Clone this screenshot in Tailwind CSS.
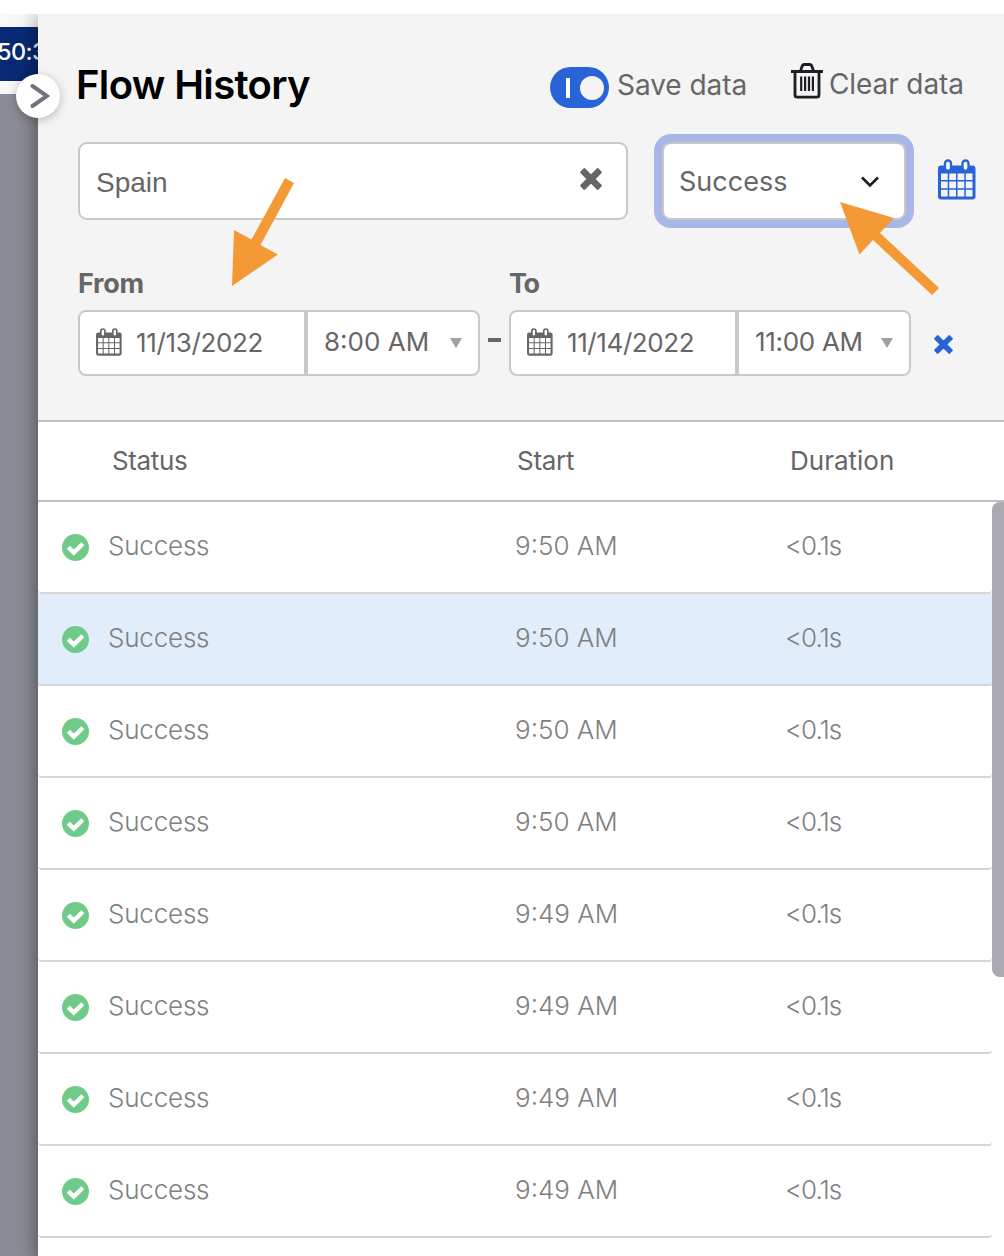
<!DOCTYPE html>
<html lang="en">
<head>
    <meta charset="UTF-8">
    <meta name="viewport" content="width=device-width, initial-scale=1.0">
    <title>Flow History</title>
    <script src="https://cdn.jsdelivr.net/npm/@tailwindcss/browser@4"></script>
</head>
<body class="bg-white font-['Inter','Liberation_Sans',sans-serif] text-[#666666]">
    <!-- Shared icons -->
    <svg class="hidden">
        <symbol id="calendar" viewBox="0 0 38 41">
            <path fill="currentColor" fill-rule="evenodd" d="M3 6.500H34.500Q37.500 6.500 37.500 9.500V37.500Q37.500 40.500 34.500 40.500H3Q0 40.500 0 37.500V9.500Q0 6.500 3 6.500ZM3 14.500V21H9.700V14.500ZM11.200 14.500V21H18V14.500ZM19.500 14.500V21H26.300V14.500ZM27.800 14.500V21H34.500V14.500ZM3 22.500V29.200H9.700V22.500ZM11.200 22.500V29.200H18V22.500ZM19.500 22.500V29.200H26.300V22.500ZM27.800 22.500V29.200H34.500V22.500ZM3 30.700V37.500H9.700V30.700ZM11.200 30.700V37.500H18V30.700ZM19.500 30.700V37.500H26.300V30.700ZM27.800 30.700V37.500H34.500V30.700Z"/>
            <rect x="7" y="1.500" width="6" height="10.500" rx="3" fill="white" stroke="currentColor" stroke-width="2.400"/>
            <rect x="24.500" y="1.500" width="6" height="10.500" rx="3" fill="white" stroke="currentColor" stroke-width="2.400"/>
        </symbol>
        <symbol id="cross" viewBox="0 0 22 22">
            <path d="M4.300 1.500L11 8.200L17.700 1.500L20.500 4.300L13.800 11L20.500 17.700L17.700 20.500L11 13.800L4.300 20.500L1.500 17.700L8.200 11L1.500 4.300Z" fill="currentColor" stroke="currentColor" stroke-width="2.600" stroke-linejoin="round"/>
        </symbol>
    </svg>

    <div class="relative h-[1256px] w-[1004px] overflow-hidden pt-[14px]">
        <div class="flex h-full overflow-hidden">
            <!-- Page behind the panel -->
            <div class="w-[38px] shrink-0 overflow-hidden bg-[#8c8c96]">
                <div class="h-[13px] bg-[#f8f8f8]"></div>
                <div class="h-[54px] bg-[#082a75] pt-[9px] text-[23.5px] leading-[32px] font-medium tracking-[-0.6px] whitespace-nowrap text-white"><span class="-ml-[3px]">50:35</span></div>
                <div class="h-[13px] bg-[#f8f8f8]"></div>
            </div>

            <!-- Panel -->
            <div class="flex w-[966px] flex-col bg-white shadow-[0_4px_20px_rgba(0,0,0,0.5)]">
                <div class="h-[408px] shrink-0 border-b-2 border-[#bfbfc5] bg-[#f4f4f4] pl-10">
                    <!-- Title bar -->
                    <div class="flex h-[128px] pt-[50px]">
                        <h1 class="-ml-0.5 w-[474px] text-[40px] leading-[42px] font-semibold tracking-[-0.65px] text-black">Flow History</h1>
                        <div class="mt-[3px] flex h-[41px] w-[59px] items-center rounded-full bg-[#2864d7] pr-[5px] pl-4">
                            <div class="h-5 w-1 bg-white"></div>
                            <div class="ml-auto size-6 rounded-full bg-[#f4f4f4]"></div>
                        </div>
                        <span class="ml-2 w-[174px] text-[28px] leading-[43px] tracking-[-0.05px] whitespace-nowrap">Save data</span>
                        <svg class="-mt-px h-9 w-8" viewBox="0 0 32 36" fill="none" stroke="#1d1d24" stroke-width="2.800">
                            <path d="M0 8.500H32M4 8.500V32Q4 34.200 6.200 34.200H25.800Q28 34.200 28 32V8.500M9.500 8L11 3.500Q11.700 1.500 13.500 1.500H18.500Q20.300 1.500 21 3.500L22.500 8"/>
                            <path d="M10.200 13.500V28M14.100 13.500V28M18 13.500V28M21.900 13.500V28" stroke-width="2.200"/>
                        </svg>
                        <span class="ml-1.5 text-[28px] leading-[41px] tracking-[-0.1px] whitespace-nowrap">Clear data</span>
                    </div>

                    <!-- Filters -->
                    <div class="flex h-[78px]">
                        <div class="flex w-[550px] items-center rounded-[9px] border-2 border-[#c9c9c9] bg-white pr-6 pl-4">
                            <span class="pt-1 font-['Liberation_Sans',sans-serif] text-[28px] leading-8">Spain</span>
                            <svg class="mb-[5px] ml-auto size-[22px]"><use href="#cross"/></svg>
                        </div>
                        <div class="ml-[34px] flex w-[244px] items-center rounded-[9px] border-2 border-[#c9c9c9] bg-white pr-[25px] pl-[15px] ring-8 ring-[#a9b6e8]">
                            <span class="pt-0.5 text-[27px] leading-8">Success</span>
                            <svg class="mt-0.5 ml-auto h-3 w-[18px]" viewBox="0 0 18 12" fill="none" stroke="#1c1c20" stroke-width="2.600"><path d="M1 1.500L9 9.500L17 1.500"/></svg>
                        </div>
                        <svg class="mt-[17px] ml-[32px] h-[41px] w-[38px] text-[#2864d7]"><use href="#calendar"/></svg>
                    </div>

                    <!-- Date range -->
                    <div class="flex pt-[46px] text-[27px] leading-9 font-bold tracking-[-0.2px]">
                        <span class="w-[431px]">From</span>
                        <span class="tracking-[-1.5px]">To</span>
                    </div>
                    <div class="mt-2 flex h-[66px] items-center text-[26px]">
                        <div class="flex h-full w-[402px] rounded-lg border-2 border-[#c9c9c9] bg-white">
                            <div class="flex w-[228px] items-center border-r-4 border-[#c9c9c9] pl-4">
                                <svg class="mb-0.5 h-7 w-[26px]"><use href="#calendar"/></svg>
                                <span class="mb-0.5 ml-3.5 tracking-[-0.35px]">11/13/2022</span>
                            </div>
                            <div class="flex flex-1 items-center pr-4 pl-4">
                                <span class="mb-[3px] whitespace-nowrap">8:00 AM</span>
                                <svg class="ml-auto h-[10px] w-3" viewBox="0 0 12 10"><path d="M0 0H12L6 10Z" fill="#a0a0a0"/></svg>
                            </div>
                        </div>
                        <div class="mr-2 mb-1.5 ml-2 h-1 w-[13px] bg-[#666666]"></div>
                        <div class="flex h-full w-[402px] rounded-lg border-2 border-[#c9c9c9] bg-white">
                            <div class="flex w-[228px] items-center border-r-4 border-[#c9c9c9] pl-4">
                                <svg class="mb-0.5 h-7 w-[26px]"><use href="#calendar"/></svg>
                                <span class="mb-0.5 ml-3.5 tracking-[-0.4px]">11/14/2022</span>
                            </div>
                            <div class="flex flex-1 items-center pr-4 pl-4">
                                <span class="mb-[3px] tracking-[-0.3px] whitespace-nowrap">11:00 AM</span>
                                <svg class="ml-auto h-[10px] w-3" viewBox="0 0 12 10"><path d="M0 0H12L6 10Z" fill="#a0a0a0"/></svg>
                            </div>
                        </div>
                        <svg class="mt-0.5 ml-[23px] size-[19px] text-[#2864d7]"><use href="#cross"/></svg>
                    </div>
                </div>

                <!-- Table -->
                <div class="flex h-20 shrink-0 items-center border-b-2 border-[#bfbfc5] pb-0.5 pl-[74px] text-[26px]">
                    <span class="w-[405px] tracking-[-0.35px]">Status</span>
                    <span class="w-[273px] tracking-[-0.3px]">Start</span>
                    <span>Duration</span>
                </div>
                <div class="flex">
                    <div id="rows" class="w-[954px]"></div>
                    <div class="h-[475px] w-3 rounded-l-[8px] bg-[#aaaab0]"></div>
                </div>
            </div>
        </div>

        <!-- Collapse button -->
        <div class="absolute top-[74px] left-4 flex size-11 items-center justify-center rounded-full bg-white shadow-[0_2px_10px_rgba(0,0,0,0.25)]">
            <svg class="ml-1 h-[26px] w-5" viewBox="0 0 20 26" fill="none" stroke="#73737b" stroke-width="4" stroke-linecap="round"><path d="M2.500 3L17 13L2.500 23"/></svg>
        </div>

        <!-- Callout arrows -->
        <svg class="absolute inset-0 h-full w-full" fill="#f39a37">
            <path d="M285 178L294 183L260.500 245L278 254.500L232 286L234 230L251.500 239.500Z"/>
            <path d="M840 202L894 218L880 233L939 288L932 295L873 240L859.500 254.500Z"/>
        </svg>
    </div>

    <script>
        const times = ['9:50 AM', '9:50 AM', '9:50 AM', '9:50 AM', '9:49 AM', '9:49 AM', '9:49 AM', '9:49 AM'];
        const selected = 1;

        document.getElementById('rows').innerHTML = times.map((time, i) => `
            <div class="${i === selected ? 'bg-[#e1edfb]' : 'bg-white'}">
                <div class="flex h-[92px] items-center rounded-b-[4px] border-b-2 border-[#d6d6d6] pb-[3px] pl-6 text-[26px] font-light text-[#808080]">
                    <svg class="mt-[3px] size-[27px]" viewBox="0 0 27 27">
                        <circle cx="13.500" cy="13.500" r="13.500" fill="#70cb8a"/>
                        <path d="M6.300 13.200L11.800 18.600L20.800 9.700" fill="none" stroke="white" stroke-width="4.400"/>
                    </svg>
                    <span class="ml-[19px] w-[407px] tracking-[-0.2px]">Success</span>
                    <span class="w-[270px]">${time}</span>
                    <span class="tracking-[-1px]">&lt;0.1s</span>
                </div>
            </div>`).join('');
    </script>
</body>
</html>
